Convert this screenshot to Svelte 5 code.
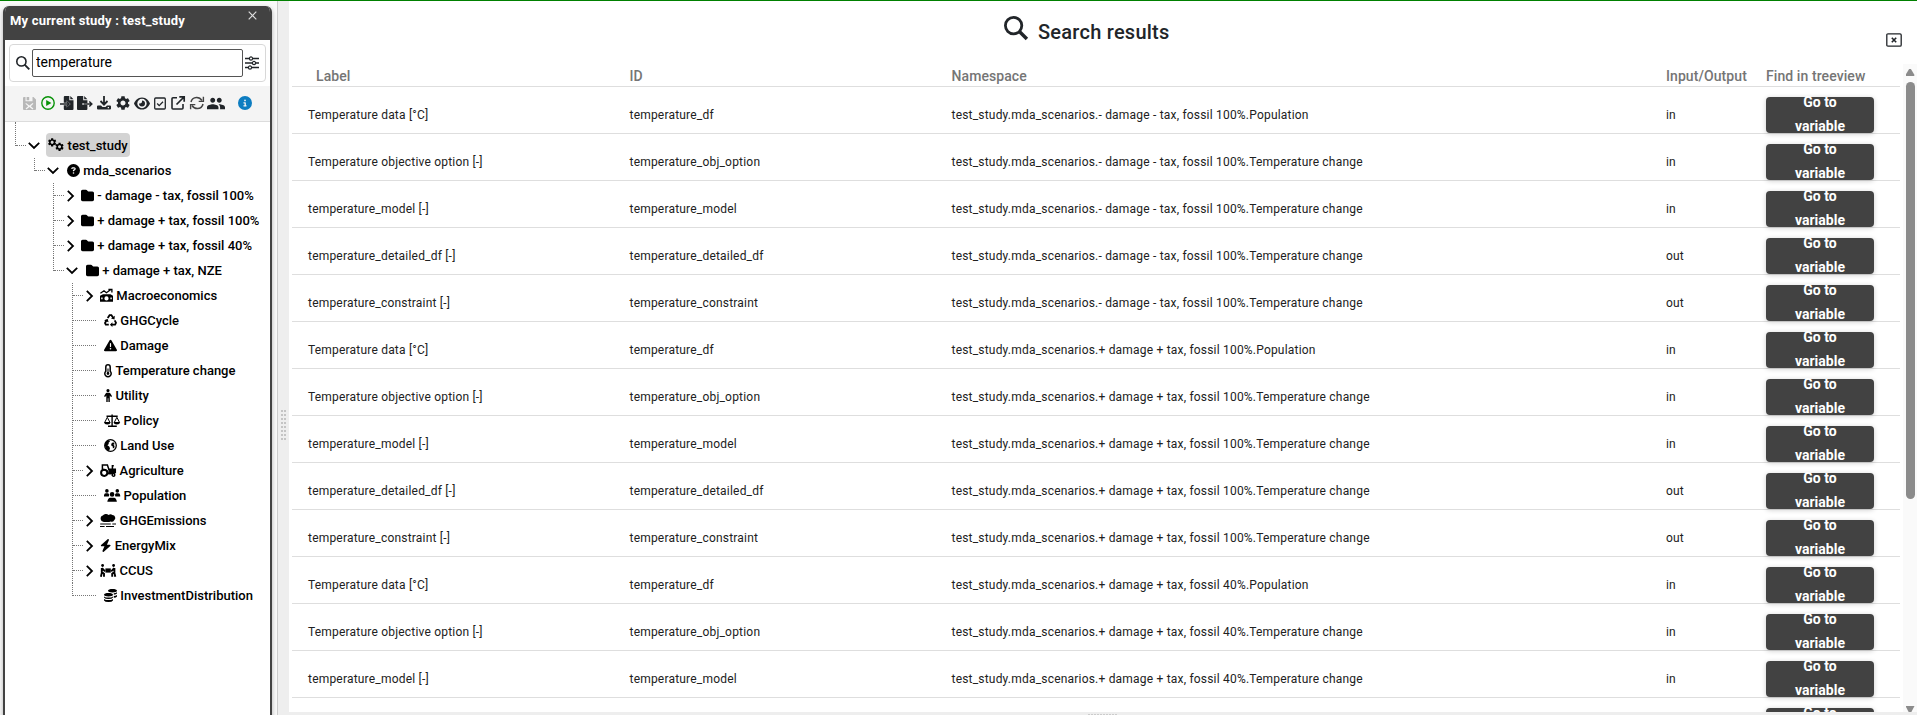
<script>
  const circle = (x, y, r) => `M${x - r} ${y}a${r} ${r} 0 1 0 ${2 * r} 0a${r} ${r} 0 1 0 ${-2 * r} 0z`;
  const gear =
    'M19.14 12.94c.04-.3.06-.61.06-.94 0-.32-.02-.64-.07-.94l2.03-1.58c.18-.14.23-.41.12-.61l-1.92-3.32c-.12-.22-.37-.29-.59-.22l-2.39.96c-.5-.38-1.03-.7-1.62-.94l-.36-2.54c-.04-.24-.24-.41-.48-.41h-3.84c-.24 0-.43.17-.47.41l-.36 2.54c-.59.24-1.13.57-1.62.94l-2.39-.96c-.22-.08-.47 0-.59.22L2.74 8.87c-.12.21-.08.47.12.61l2.03 1.58c-.05.3-.09.63-.09.94s.02.64.07.94l-2.03 1.58c-.18.14-.23.41-.12.61l1.92 3.32c.12.22.37.29.59.22l2.39-.96c.5.38 1.03.7 1.62.94l.36 2.54c.05.24.24.41.48.41h3.84c.24 0 .44-.17.47-.41l.36-2.54c.59-.24 1.13-.56 1.62-.94l2.39.96c.22.08.47 0 .59-.22l1.92-3.32c.12-.22.07-.47-.12-.61l-2.01-1.58zM12 15.6c-1.98 0-3.6-1.62-3.6-3.6s1.62-3.6 3.6-3.6 3.6 1.62 3.6 3.6-1.62 3.6-3.6 3.6z';

  // Each icon: width, height, viewBox, and shapes as [path, stroke width (0 = filled), transform]
  const icons = {
    search: { w: 14, h: 14, box: '0 0 14 14', p: [[circle(5.4, 5.4, 4.6), 1.6], ['M8.6 8.6L13.3 13.3', 1.9]] },
    searchBig: { w: 24, h: 24, box: '0 0 24 24', p: [[circle(9.6, 9.6, 8.2), 2.8], ['M15.4 15.4L22.9 22.9', 3.5]] },
    sliders: { w: 14, h: 14, box: '0 0 14 14', p: [['M0 2.5H4M8 2.5H14M0 7H7M11 7H14M0 11.5H3M7 11.5H14', 1.4], [circle(6, 2.5, 1.6), 1.2], [circle(9, 7, 1.6), 1.2], [circle(5, 11.5, 1.6), 1.2]] },
    close: { w: 9, h: 9, box: '0 0 9 9', p: [['M.7.7L8.3 8.3M8.3.7L.7 8.3', 1.2]] },
    closeBox: { w: 16, h: 14, box: '0 0 16 14', p: [['M2 .8H14Q15.2.8 15.2 2V12Q15.2 13.2 14 13.2H2Q.8 13.2.8 12V2Q.8.8 2 .8z', 1.3], ['M5.8 4.8L10.2 9.2M10.2 4.8L5.8 9.2', 1.6]] },
    save: { w: 13, h: 13, box: '0 0 13 13', p: [['M1 0H2.5V4.2H9.5V0H10.5L13 2.5V12Q13 13 12 13H1Q0 13 0 12V1Q0 0 1 0zM3.6 0H6.2V3.2H3.6zM3 6L2.4 6.8 5.2 9.2 2.6 11.6 3.4 12.4 6.4 10 9.6 12.4 10.4 11.4 7.8 9.2 10.4 6.8 9.6 6 6.4 8.4z', 0]] },
    play: { w: 14, h: 14, box: '0 0 14 14', p: [[circle(7, 7, 6.2), 1.4], ['M5.2 3.9L10.4 7 5.2 10.1z', 0]] },
    import: { w: 14, h: 14, box: '0 0 14 14', p: [['M4.8 0H9.3V4.2H13.5V13Q13.5 14 12.5 14H4.8Q3.8 14 3.8 13V9.3H6.7V11.5L10.5 8 6.7 4.6V6.7H3.8V1Q3.8 0 4.8 0zM10.3 0L13.5 3.2H10.3z', 0], ['M0 8H9M6.8 5.6L9.2 8 6.8 10.4', 1.4]] },
    export: { w: 16, h: 14, box: '0 0 16 14', p: [['M1 0H6.2V4.2H10.4V7H5.5V9H10.4V13Q10.4 14 9.4 14H1Q0 14 0 13V1Q0 0 1 0zM7.2 0L10.4 3.2H7.2z', 0], ['M6.5 8H14.7M12.3 5.4L14.9 8 12.3 10.6', 1.4]] },
    download: { w: 14, h: 14, box: '0 0 14 14', p: [['M7 0V8M3.5 5L7 8.6 10.5 5', 1.8], ['M1 9.5H4L5.5 11H8.5L10 9.5H13Q14 9.5 14 10.5V12.5Q14 13.5 13 13.5H1Q0 13.5 0 12.5V10.5Q0 9.5 1 9.5zM10.7 11H12V12.2H10.7z', 0]] },
    gear: { w: 14, h: 14, box: '2 2 20 20', p: [[gear, 0]] },
    eye: { w: 16, h: 13, box: '0 0 16 13', p: [['M8 .4C3.6.4 1 3.8 0 6.5 1 9.2 3.6 12.6 8 12.6S15 9.2 16 6.5C15 3.8 12.4.4 8 .4zM8 1.8A4.7 4.7 0 1 1 8 11.2 4.7 4.7 0 0 1 8 1.8zM8 3.5Q8.5 6.9 5 6.5A3 3 0 1 0 8 3.5z', 0]] },
    check: { w: 12, h: 13, box: '0 0 12 13', p: [['M1.7 1H10.3Q11.3 1 11.3 2V11Q11.3 12 10.3 12H1.7Q.7 12 .7 11V2Q.7 1 1.7 1z', 1.3], ['M3.2 6.5L5.2 8.6 9 4.7', 1.3]] },
    external: { w: 14, h: 14, box: '0 0 14 14', p: [['M6 1.8H2Q1 1.8 1 2.8V12Q1 13 2 13H11Q12 13 12 12V8', 1.6], ['M8.3.8H13.2V5.7M13 1L5.5 8.5', 1.7]] },
    refresh: { w: 14, h: 14, box: '0 0 14 14', p: [['M1 6Q2 1.6 6.5 1.4 10 1.3 12 4.5M13 8Q12 12.4 7.5 12.6 4 12.7 2 9.5', 1.5], ['M13.4.7V5.4H8.7M.6 13.3V8.6H5.3', 1.4]] },
    group: { w: 18, h: 15, box: '1 3 22 18', p: [['M16 11c1.66 0 2.99-1.34 2.99-3S17.66 5 16 5c-1.66 0-3 1.34-3 3s1.34 3 3 3zm-8 0c1.66 0 2.99-1.34 2.99-3S9.66 5 8 5C6.34 5 5 6.34 5 8s1.34 3 3 3zm0 2c-2.33 0-7 1.17-7 3.5V19h14v-2.5c0-2.33-4.67-3.5-7-3.5zm8 0c-.29 0-.62.02-.97.05 1.16.84 1.97 1.97 1.97 3.45V19h6v-2.5c0-2.33-4.67-3.5-7-3.5z', 0]] },
    info: { w: 14, h: 14, box: '0 0 512 512', p: [['M256 512A256 256 0 1 0 256 0a256 256 0 1 0 0 512zM216 336h24V272H216c-13.3 0-24-10.7-24-24s10.7-24 24-24h48c13.3 0 24 10.7 24 24v88h8c13.3 0 24 10.7 24 24s-10.7 24-24 24H216c-13.3 0-24-10.7-24-24s10.7-24 24-24zm40-208a32 32 0 1 1 0 64 32 32 0 1 1 0-64z', 0]] },
    gears: { w: 16.25, h: 13, box: '0 0 16.25 13', p: [[gear, 0, 'translate(-1 -1.8) scale(.43)'], [gear, 0, 'translate(6.4 2.6) scale(.43)']] },
    question: { w: 13, h: 13, box: '0 0 512 512', p: [['M256 512A256 256 0 1 0 256 0a256 256 0 1 0 0 512zM169.8 165.3c7.9-22.3 29.1-37.3 52.8-37.3h58.3c34.9 0 63.1 28.3 63.1 63.1c0 22.6-12.1 43.5-31.7 54.8L280 264.4c-.2 13-10.9 23.6-24 23.6c-13.3 0-24-10.7-24-24V250.5c0-8.6 4.6-16.5 12.1-20.8l44.3-25.4c4.7-2.7 7.6-7.7 7.6-13.1c0-8.4-6.8-15.1-15.1-15.1H222.6c-3.4 0-6.4 2.1-7.5 5.3l-.4 1.2c-4.4 12.5-18.2 19-30.6 14.6s-19-18.2-14.6-30.6l.4-1.2zM224 352a32 32 0 1 1 64 0 32 32 0 1 1 -64 0z', 0]] },
    folder: { w: 13, h: 13, box: '0 0 512 512', p: [['M64 480H448c35.3 0 64-28.7 64-64V160c0-35.3-28.7-64-64-64H288c-10.1 0-19.6-4.7-25.6-12.8L243.2 57.6C231.1 41.5 212.1 32 192 32H64C28.7 32 0 60.7 0 96V416c0 35.3 28.7 64 64 64z', 0]] },
    macro: { w: 13, h: 13, box: '0 0 13 13', p: [['M.4 4.2L4 1.8 6.4 3.8 10.6.8M8.4.5H11.9V3.4', 1.3], ['M1 6.2L3 5.3H10.4L13 6.8V12.8H0V6.8zM4.4 9.4a2.1 2.1 0 1 0 4.2 0a2.1 2.1 0 1 0 -4.2 0zM1.2 8.6V10.2H2.6V8.6zM10.4 8.6V10.2H11.8V8.6z', 0]] },
    recycle: { w: 13, h: 13, box: '0 0 13 13', p: [['M3.7 4.1L5.6 1.2H7.4L9.2 3.8M10.7 6.3L12 8.8 11.1 10.7H8M4.8 10.7H1.8L1 9 2.6 6', 1.8], ['M10.8 1.7L10.5 5.5 7 4.5zM8.4 8.2V13L5.9 10.7zM.1 6.4L3.6 4.7 4.6 8.3z', 0]] },
    warning: { w: 13, h: 13, box: '0 0 512 512', p: [['M256 32c14.2 0 27.3 7.5 34.5 19.8l216 368c7.3 12.4 7.3 27.7 .2 40.1S486.3 480 472 480H40c-14.3 0-27.6-7.7-34.7-20.1s-7-27.8 .2-40.1l216-368C228.7 39.5 241.8 32 256 32zm0 128c-13.3 0-24 10.7-24 24V296c0 13.3 10.7 24 24 24s24-10.7 24-24V184c0-13.3-10.7-24-24-24zm32 224a32 32 0 1 0 -64 0 32 32 0 1 0 64 0z', 0]] },
    thermo: { w: 8.1, h: 13, box: '0 0 8.1 13', p: [['M1.8 2.9A2.2 2.2 0 0 1 6.2 2.9V7.2A3.2 3.2 0 1 1 1.8 7.2z', 1.5], ['M4 4.5V9', 1.1], [circle(4, 9.5, 1.4), 0]] },
    person: { w: 8.1, h: 13, box: '0 0 8.1 13', p: [[circle(4, 1.6, 1.6), 0], ['M2.7 3.8H5.3Q6 3.8 6.4 4.4L8.1 7.2 7 8 5.8 6.4V13H4.4V9.2H3.7V13H2.3V6.4L1.1 8 0 7.2 1.7 4.4Q2 3.8 2.7 3.8z', 0]] },
    scale: { w: 16.25, h: 13, box: '0 0 16.25 13', p: [['M2.5 2.2H13.7M8.1.4V12M4 12.3H12.8', 1.4], ['M.8 8.2L3.3 3.3 5.8 8.2M10.4 8.2L12.9 3.3 15.4 8.2', 1], ['M0 8H6.6Q6.2 10.5 3.3 10.5T0 8zM9.6 8H16.2Q15.8 10.5 12.9 10.5T9.6 8z', 0]] },
    globe: { w: 13, h: 13, box: '0 0 13 13', p: [[circle(6.5, 6.5, 5.8), 1.3], ['M1 4.5L3 1.8 5 1.2 6 2.6 4.6 3.8 4.8 5 3.4 6.3 5.2 7.5 6 9.2 5 12.3 2.2 10.2 1 7zM8 3.8L10 3.4 10.6 5.2 9.4 5.6 10.6 7 10.2 9 8.8 9.2V7.6L7.4 6.8 7.2 5.3z', 0]] },
    tractor: { w: 16.25, h: 13, box: '0 0 16.25 13', p: [[circle(4.2, 8.8, 3.1), 2], [circle(13.5, 10.9, 1.3), 1.5], ['M2.4 5.2V1H7.4L8.8 5.2H15.3V8.4H12V9.5H8L7 6.5 2.5 5.2M12.4 5V1.8H13.8', 1.5], ['M8.5 5H15.4V8L12.8 8.6 11.2 10.2H8.2z', 0]] },
    people: { w: 16.25, h: 13, box: '0 0 16.25 13', p: [[circle(2.9, 1.9, 1.8), 0], [circle(13.3, 1.9, 1.8), 0], [circle(8.1, 5.4, 2.3), 0], ['M1.8 4.3H4.2L5.3 5.8 4.8 7.6H0V6.2Q.2 4.3 1.8 4.3zM12 4.3H14.4Q16 4.3 16.2 6.2V7.6H11.4L10.9 5.8zM6.2 8.7H10Q12.4 9 12.9 12.8H3.3Q3.8 9 6.2 8.7z', 0]] },
    smog: { w: 16.25, h: 13, box: '0 0 16.25 13', p: [['M3.8 8A3.3 3.3 0 0 1 2.8 1.6 3.8 3.8 0 0 1 8.6 1Q10.6-.6 12.4 1A3 3 0 0 1 14.2 6.3Q13 8.5 10.6 7.6L9.3 8z', 0], ['M.2 10H10.8M12.3 10H16M0 12.5H4.6M6 12.5H14', 1.1]] },
    bolt: { w: 11.4, h: 13, box: '0 0 448 512', p: [['M349.4 44.6c5.9-13.7 1.5-29.7-10.6-38.5s-28.6-8-39.9 1.8l-256 224c-10 8.8-13.6 22.9-8.9 35.3S50.7 288 64 288H175.5L98.6 467.4c-5.9 13.7-1.5 29.7 10.6 38.5s28.6 8 39.9-1.8l256-224c10-8.8 13.6-22.9 8.9-35.3s-16.6-20.7-30-20.7H272.5L349.4 44.6z', 0]] },
    carry: { w: 16.25, h: 13, box: '0 0 16.25 13', p: [[circle(2.6, 1.5, 1.4), 0], [circle(13.6, 1.5, 1.4), 0], ['M5.4 4.4H10.8V8.6H5.4z', 0], ['M1.8 4V8L4 9.7V12.8M1.9 8.4L.9 12.8M2 4.2L5 7.4M14.4 4V8L12.2 9.7V12.8M14.3 8.4L15.3 12.8M14.2 4.2L11.2 7.4', 1.9]] },
    coins: { w: 13, h: 13, box: '0 0 13 13', p: [['M4 1.7C4 .7 6 .1 8.5.1S13 .7 13 1.7 11 3.4 8.5 3.4 4 2.7 4 1.7zM0 5.7C0 4.7 2 4.1 4.5 4.1S9 4.7 9 5.7 7 7.4 4.5 7.4 0 6.7 0 5.7zM0 7.4Q1.6 8.6 4.5 8.6T9 7.4V8.4Q8 9.9 4.5 9.9T0 8.4zM0 9.9Q1.6 11.1 4.5 11.1T9 9.9V11.4Q8 13 4.5 13T0 11.4zM9.8 4.3Q11.8 4.1 13 3.2V4.5Q12.2 5.6 9.8 5.8zM9.8 7Q11.8 6.8 13 5.9V7.4Q12.2 8.5 9.8 8.8z', 0]] },
    down: { w: 12, h: 7, box: '0 0 12 7', p: [['M.8.8L6 6 11.2.8', 1.8]] },
    right: { w: 7, h: 12, box: '0 0 7 12', p: [['M.8.8L6 6 .8 11.2', 1.8]] }
  };

  const toolbar = ['save', 'play', 'import', 'export', 'download', 'gear', 'eye', 'check', 'external', 'refresh', 'group'];

  const tree = [
    { t: 'test_study', i: 'gears', l: 0, s: 'open', last: true },
    { t: 'mda_scenarios', i: 'question', l: 1, s: 'open', last: true },
    { t: '- damage - tax, fossil 100%', i: 'folder', l: 2, s: 'closed' },
    { t: '+ damage + tax, fossil 100%', i: 'folder', l: 2, s: 'closed' },
    { t: '+ damage + tax, fossil 40%', i: 'folder', l: 2, s: 'closed' },
    { t: '+ damage + tax, NZE', i: 'folder', l: 2, s: 'open', last: true },
    { t: 'Macroeconomics', i: 'macro', l: 3, s: 'closed' },
    { t: 'GHGCycle', i: 'recycle', l: 3, s: 'leaf' },
    { t: 'Damage', i: 'warning', l: 3, s: 'leaf' },
    { t: 'Temperature change', i: 'thermo', l: 3, s: 'leaf' },
    { t: 'Utility', i: 'person', l: 3, s: 'leaf' },
    { t: 'Policy', i: 'scale', l: 3, s: 'leaf' },
    { t: 'Land Use', i: 'globe', l: 3, s: 'leaf' },
    { t: 'Agriculture', i: 'tractor', l: 3, s: 'closed' },
    { t: 'Population', i: 'people', l: 3, s: 'leaf' },
    { t: 'GHGEmissions', i: 'smog', l: 3, s: 'closed' },
    { t: 'EnergyMix', i: 'bolt', l: 3, s: 'closed' },
    { t: 'CCUS', i: 'carry', l: 3, s: 'closed' },
    { t: 'InvestmentDistribution', i: 'coins', l: 3, s: 'leaf', last: true }
  ];

  const variables = [
    ['Temperature data [°C]', 'temperature_df', 'Population', 'in'],
    ['Temperature objective option [-]', 'temperature_obj_option', 'Temperature change', 'in'],
    ['temperature_model [-]', 'temperature_model', 'Temperature change', 'in'],
    ['temperature_detailed_df [-]', 'temperature_detailed_df', 'Temperature change', 'out'],
    ['temperature_constraint [-]', 'temperature_constraint', 'Temperature change', 'out']
  ];
  const scenarios = ['- damage - tax, fossil 100%', '+ damage + tax, fossil 100%', '+ damage + tax, fossil 40%'];
  const rows = scenarios
    .flatMap((s) => variables.map(([label, id, node, io]) => ({ label, id, ns: `test_study.mda_scenarios.${s}.${node}`, io })))
    .slice(0, 14);
</script>

{#snippet icon(name)}
  {@const g = icons[name]}
  <svg class="icon" width={g.w} height={g.h} viewBox={g.box} aria-hidden="true">
    {#each g.p as [d, sw, tf]}
      <path {d} transform={tf} fill={sw ? 'none' : 'currentColor'} fill-rule="evenodd" stroke={sw ? 'currentColor' : 'none'} stroke-width={sw} />
    {/each}
  </svg>
{/snippet}

<div class="app">
  <aside class="side">
    <section class="panel">
      <header class="head">
        <span>My current study : test_study</span>
        <button class="plain close" aria-label="Close">{@render icon('close')}</button>
      </header>
      <div class="searchbox">
        {@render icon('search')}
        <input value="temperature" aria-label="Search" />
        {@render icon('sliders')}
      </div>
      <div class="tools">
        {#each toolbar as name}
          <span class="tool {name}">{@render icon(name)}</span>
        {/each}
        <span class="tool info">{@render icon('info')}</span>
      </div>
      <div class="tree">
        {#each tree as n}
          <div class="node {n.s}" class:root={n.l === 0} style="padding-left: {10 + n.l * 19}px">
            <span class="stem" class:last={n.last}></span>
            <span class="twig"></span>
            {#if n.s !== 'leaf'}
              <span class="toggle">{@render icon(n.s === 'open' ? 'down' : 'right')}</span>
            {/if}
            <span class="name">{@render icon(n.i)}<span>{n.t}</span></span>
          </div>
        {/each}
      </div>
    </section>
  </aside>
  <div class="gutter"><i class="grip"></i></div>
  <div class="right">
    <main class="results">
      <header class="title">
        <h1>{@render icon('searchBig')}<span>Search results</span></h1>
        <button class="plain boxed" aria-label="Close results">{@render icon('closeBox')}</button>
      </header>
      <div class="scroller">
        <div class="table">
          <div class="row th"><span class="first">Label</span><span>ID</span><span>Namespace</span><span>Input/Output</span><span>Find in treeview</span></div>
          {#each rows as r}
            <div class="row td">
              <span>{r.label}</span><span>{r.id}</span><span>{r.ns}</span><span>{r.io}</span>
              <button class="goto">Go to variable</button>
            </div>
          {/each}
        </div>
        <div class="bar">
          <i class="up"></i><i class="thumb"></i><i class="dn"></i>
        </div>
      </div>
    </main>
    <div class="hgutter"><i></i></div>
  </div>
</div>

<style>
  :global(body) { margin: 0; overflow: hidden; }
  .app { box-sizing: border-box; width: 1917px; height: 715px; border-top: 1px solid #008000; display: flex; overflow: hidden; background: #fff; font-family: Roboto, sans-serif; color: #212529; }
  .icon { display: block; flex: none; overflow: visible; }
  .plain { border: 0; padding: 0; background: none; color: inherit; display: block; }
  .side { box-sizing: border-box; width: 278px; border-right: 1px solid #ccc; padding: 5px 5px 0 3px; background: #fafafa; }
  .panel { box-sizing: border-box; height: 730px; border: 2px solid #424242; border-top: 0; border-radius: 6px 6px 0 0; background: #fff; overflow: hidden; box-shadow: 0 2px 5px rgba(0, 0, 0, .3); }
  .head { box-sizing: border-box; height: 34px; background: #424242; color: #fff; display: flex; justify-content: space-between; padding: 6px 13px 0 5px; font-size: 13px; font-weight: 700; line-height: 18px; letter-spacing: .19px; }
  .close { margin-top: -2px; align-self: flex-start; padding-top: 1px; margin-right: 0; color: #ddd; }
  .searchbox { box-sizing: border-box; margin: 4px 4px 4px; height: 38px; border: 1px solid #d8d8d8; border-radius: 4px; display: flex; align-items: center; padding: 0 5px 0 6px; }
  .searchbox input { box-sizing: border-box; width: 211px; height: 28px; margin: 0 2px; border: 1px solid #555; border-radius: 2px; padding: 0 3px 2px; font: 14px Roboto, sans-serif; color: #000; outline: 0; }
  .tools { box-sizing: border-box; height: 36px; display: flex; align-items: center; padding: 0 0 1px 15px; background: #f4f4f4; border-bottom: 1px solid #dcdcdc; }
  .tool { width: 18.65px; display: flex; justify-content: center; flex: none; }
  .tool.save { color: #b8b8b8; }
  .tool.play { color: #079207; }
  .tool.eye { padding-left: 1px; width: 17.65px; }
  .tool.refresh { color: #444; }
  .tool.info { color: #0d7dc1; margin-left: 10.6px; }
  .node { display: flex; height: 25px; color: #000; font-size: 13px; font-weight: 500; white-space: nowrap; }
  .node.root { height: 36px; align-items: flex-end; }
  .stem { width: 0; height: 100%; border-left: 1px dotted #777; flex: none; }
  .stem.last { height: 13px; }
  .root .stem.last { height: 24px; align-self: flex-start; }
  .twig { width: 10px; height: 13px; border-bottom: 1px dotted #777; box-sizing: border-box; flex: none; }
  .root .twig { margin-bottom: 12px; }
  .leaf .twig { width: 23px; }
  .toggle { height: 25px; margin-left: 2px; display: flex; align-items: center; }
  .closed .toggle { margin-left: 3px; }
  .name { height: 24px; display: flex; align-items: center; gap: 3.3px; padding: 0 2px; margin-left: 6px; border-radius: 4px; }
  .closed .name { margin-left: 5px; }
  .root .name { background: #d3d3d3; margin: 0 0 1px 6px; }
  .gutter { width: 11px; background: #eee; display: flex; align-items: center; justify-content: center; }
  .grip { width: 5px; height: 31px; margin-top: 135px; background: repeating-linear-gradient(to bottom, transparent 0 2px, #eee 2px 4px), repeating-linear-gradient(to right, #c4c4c4 0 2px, transparent 2px 3px); }
  .right { width: 1628px; display: flex; flex-direction: column; }
  .results { height: 711px; overflow: hidden; }
  .title { height: 63px; display: flex; align-items: flex-start; }
  h1 { margin: 15px 0 0 715px; display: flex; gap: 10px; font-size: 20px; font-weight: 500; line-height: 32px; letter-spacing: .25px; flex: 1; }
  .boxed { margin: 32px 15px 0 0; }
  .scroller { height: 648px; display: flex; justify-content: space-between; }
  .table { width: 1608px; margin-left: 3px; }
  .row { box-sizing: border-box; display: grid; grid-template-columns: 321.5px 322px 714.5px 100px 108px; border-bottom: 1px solid #dedede; padding-left: 16px; white-space: nowrap; }
  .th { height: 23px; font-size: 14px; font-weight: 500; line-height: 24px; letter-spacing: .08px; color: #757575; }
  .th .first { padding-left: 8px; }
  .td { height: 47px; font-size: 12px; line-height: 56px; letter-spacing: .2px; color: #212121; }
  .td > span { height: 46px; }
  .goto { width: 108px; height: 36px; margin: 10px 0 0; padding: 0 24px; border: 0; border-radius: 4px; background: #424242; color: #fff; font: 700 14px/23.6px Roboto, sans-serif; letter-spacing: normal; display: flex; align-items: center; justify-content: center; white-space: normal; text-align: center; box-shadow: 0 1px 5px rgba(0, 0, 0, .2); }
  .bar { width: 14px; background: #fafafa; display: flex; flex-direction: column; align-items: center; }
  .up { margin-top: 5px; width: 9px; height: 7px; background: #8b8b8b; clip-path: polygon(40% 0, 60% 0, 100% 85%, 95% 100%, 5% 100%, 0 85%); }
  .thumb { margin-top: 6px; width: 9px; height: 417px; border-radius: 5px; background: #8b8b8b; }
  .dn { margin-top: auto; width: 9px; height: 6px; background: #8b8b8b; clip-path: polygon(0 0, 100% 0, 65% 100%, 35% 100%); }
  .hgutter { height: 3px; background: #eee; display: flex; justify-content: center; align-items: flex-end; }
  .hgutter i { width: 30px; height: 1px; background: repeating-linear-gradient(to right, #ccc 0 2px, transparent 2px 3px); }
</style>
